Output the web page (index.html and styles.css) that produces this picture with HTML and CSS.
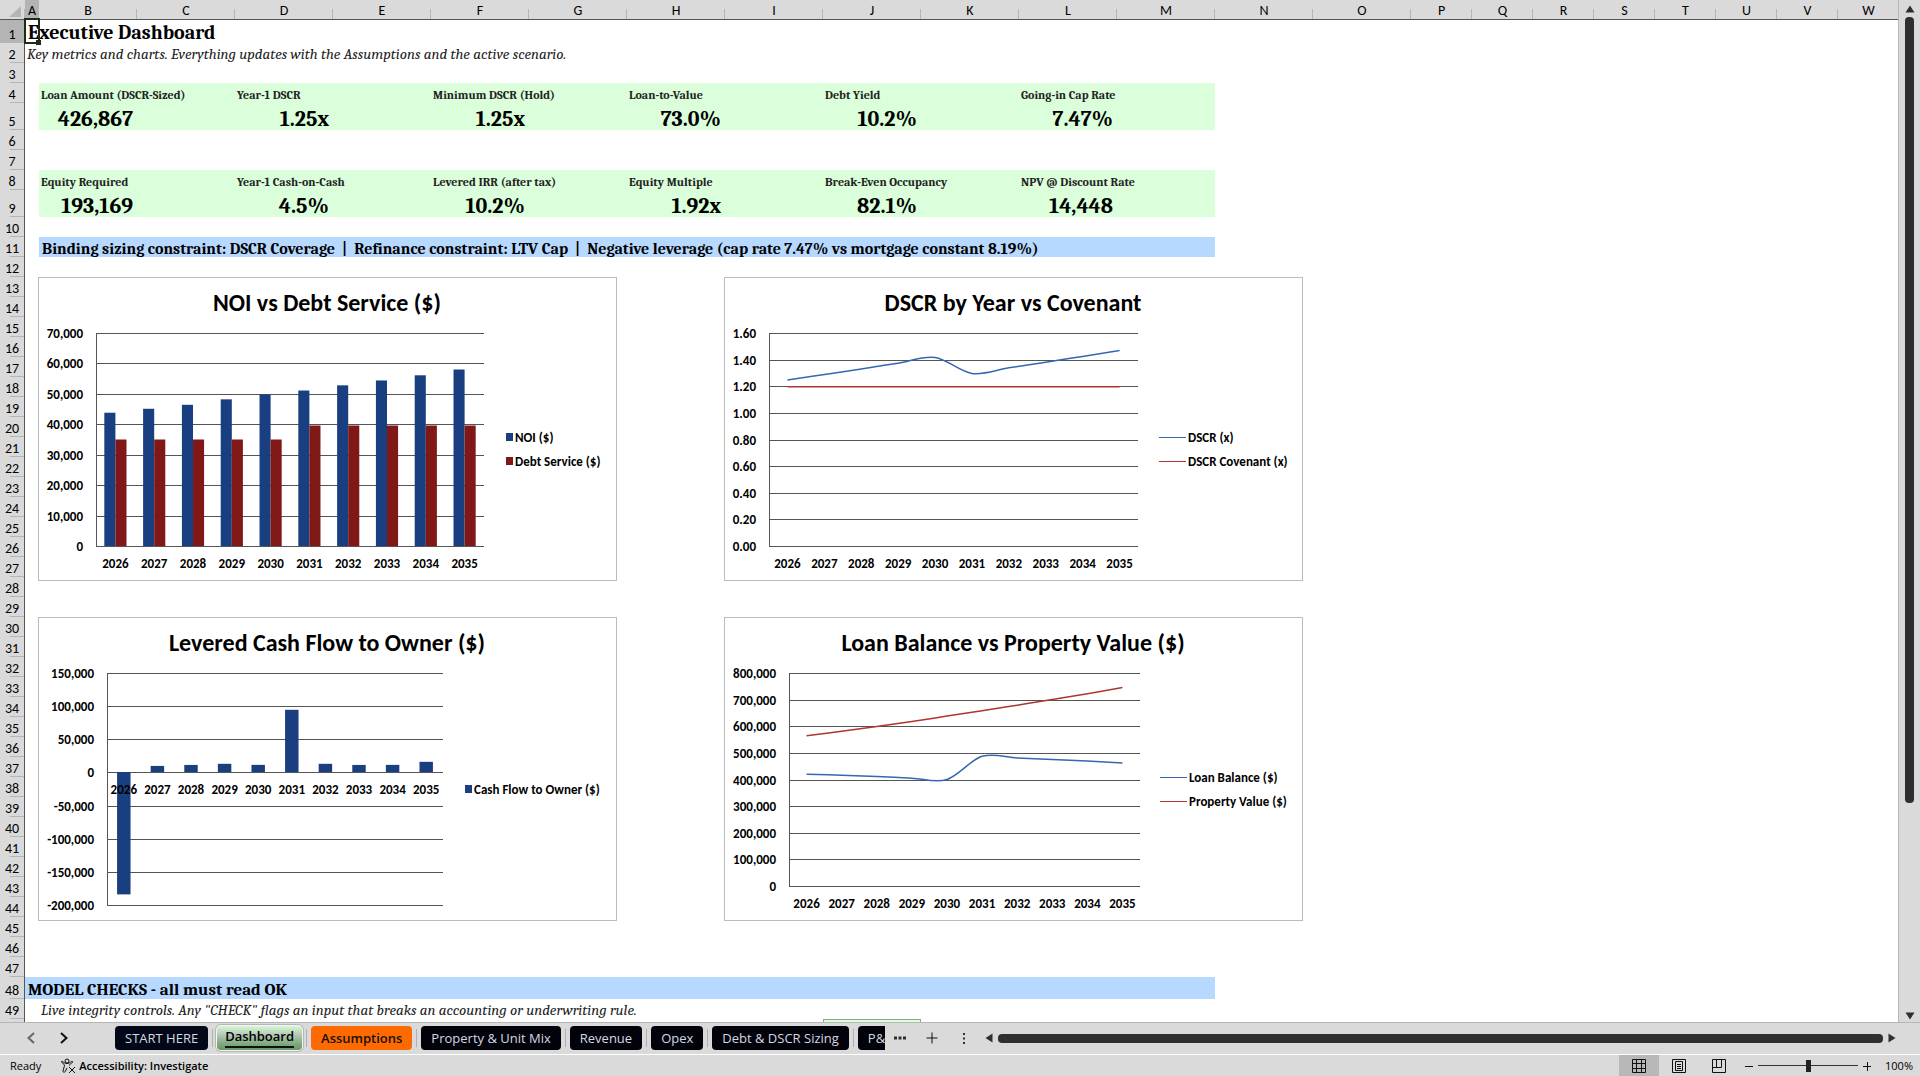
FILE: index.html
```html
<!DOCTYPE html>
<html lang="en">
  <head>
    <meta charset="UTF-8" />
    <meta name="viewport" content="width=device-width, initial-scale=1.0" />
    <title>Executive Dashboard</title>
    <link rel="stylesheet" href="styles.css">
  </head>
  <body>
    <main class="workspace">
      <div class="sheet">
        <table class="grid" id="grid"></table>
        <div class="selection"></div>
        <svg class="chart chart-noi" id="chart-noi" viewBox="0 0 579 304"></svg>
        <svg class="chart chart-dscr" id="chart-dscr" viewBox="0 0 579 304"></svg>
        <svg class="chart chart-cash" id="chart-cash" viewBox="0 0 579 304"></svg>
        <svg class="chart chart-loan" id="chart-loan" viewBox="0 0 579 304"></svg>
      </div>
      <div class="vscroll">
        <svg class="arrow" width="10" height="8"><path d="M5 0.5L9.5 7.5H0.5Z" /></svg>
        <div class="vtrack"><div class="vthumb"></div></div>
        <svg class="arrow" width="10" height="8"><path d="M5 7.5L9.5 0.5H0.5Z" /></svg>
      </div>
    </main>

    <nav class="tabbar">
      <div class="tab-arrows">
        <button type="button" aria-label="Previous sheets">
          <svg width="8" height="12"><path class="dim" d="M7 1L1.5 6L7 11" /></svg>
        </button>
        <button type="button" aria-label="Next sheets">
          <svg width="8" height="12"><path d="M1 1L6.500 6L1 11" /></svg>
        </button>
      </div>
      <div class="tabs">
        <button type="button" class="tab navy">START HERE</button>
        <button type="button" class="tab active"><span>Dashboard</span></button>
        <button type="button" class="tab orange">Assumptions</button>
        <button type="button" class="tab">Property &amp; Unit Mix</button>
        <button type="button" class="tab">Revenue</button>
        <button type="button" class="tab">Opex</button>
        <button type="button" class="tab">Debt &amp; DSCR Sizing</button>
        <button type="button" class="tab">P&amp;L</button>
      </div>
      <div class="tab-tools">
        <button type="button" aria-label="More sheets">
          <svg width="14" height="14"><path class="fill" d="M1 5.500h3v3h-3zM5.500 5.500h3v3h-3zM10 5.500h3v3h-3z" /></svg>
        </button>
        <button type="button" aria-label="New sheet">
          <svg width="14" height="14"><path d="M7 1.500V12.500M1.500 7H12.500" /></svg>
        </button>
        <button type="button" aria-label="Options">
          <svg width="14" height="14"><path class="fill" d="M6 2h2v2h-2zM6 6.500h2v2h-2zM6 11h2v2h-2z" /></svg>
        </button>
      </div>
      <div class="hscroll">
        <svg class="arrow" width="8" height="10"><path d="M0.5 5L7.500 0.5V9.500Z" /></svg>
        <div class="hthumb"></div>
        <svg class="arrow" width="8" height="10"><path d="M7.500 5L0.5 0.5V9.500Z" /></svg>
      </div>
    </nav>

    <footer class="statusbar">
      <span class="ready">Ready</span>
      <button type="button" class="access">
        <svg width="16" height="16" viewBox="0 0 16 16">
          <circle cx="7" cy="3" r="2" />
          <path d="M1.500 3.500C2.500 2.500 3.500 5.500 7 5.500S11.500 2.500 12.500 3.500C13.500 5 9.500 5.500 9.500 7.500M1.500 3.500C1 5 4.500 5.500 4.500 7.500L3 13C3 15 5 14.500 5.500 13L7 10" />
          <path d="M9 9L15 15M15 9L9 15" />
        </svg>
        Accessibility: Investigate
      </button>
      <div class="views">
        <button type="button" class="selected" aria-label="Normal view">
          <svg width="14" height="14"><path d="M0.5 0.5H13.500V13.500H0.5ZM4.500 1V13M9.500 1V13M1 4.500H13M1 9.500H13" /></svg>
        </button>
        <button type="button" aria-label="Page layout view">
          <svg width="14" height="14"><path d="M0.5 0.5H13.500V13.500H0.5ZM3.500 2.500H10.500V11.500H3.500ZM5 5.500H9M5 7.500H9M5 9.500H9" /></svg>
        </button>
        <button type="button" aria-label="Page break view">
          <svg width="14" height="14"><path d="M0.5 0.5H13.500V13.500H0.5ZM4.500 1V8M9.500 1V8.500M1 8.500H9.500" /></svg>
        </button>
      </div>
      <div class="zoom">
        <button type="button" aria-label="Zoom out">
          <svg width="8" height="10"><path d="M0 5.500H8" /></svg>
        </button>
        <input type="range" min="10" max="190" value="100" aria-label="Zoom" />
        <button type="button" aria-label="Zoom in">
          <svg width="8" height="10"><path d="M0 5.500H8M4.500 1V10" /></svg>
        </button>
        <span class="percent">100%</span>
      </div>
    </footer>

    <script src="script.js"></script>
  </body>
</html>
```
FILE: styles.css
```css
* {
  box-sizing: border-box;
}

body {
  margin: 0;
  height: 100vh;
  display: flex;
  flex-direction: column;
  overflow: hidden;
  background-color: #dadada;
  color: #000;
  font-family: "Open Sans", "Noto Sans", sans-serif;
  font-size: 13px;
}

button {
  border: none;
  padding: 0;
  background: none;
  color: inherit;
  font: inherit;
  cursor: pointer;
}

svg path,
svg circle {
  fill: none;
  stroke: #111;
}

svg .fill,
.arrow path {
  fill: #2f2f2f;
  stroke: none;
}

svg .dim {
  stroke: #666;
}

/* Worksheet */
.workspace {
  flex: 1;
  min-height: 0;
  display: flex;
}

.sheet {
  position: relative;
  flex: 1;
  min-width: 0;
  overflow: hidden;
  background-color: white;
  border-right: 1px solid #b5b5b5;
}

.grid {
  table-layout: fixed;
  width: 1899px;
  border-collapse: separate;
  border-spacing: 0;
  font-family: Cambria, "Liberation Serif", serif;
  font-size: 16px;
  line-height: 18px;
}

.grid th,
.grid td {
  padding: 0;
  height: 20px;
  white-space: nowrap;
  vertical-align: bottom;
}

.grid .col-rownum {
  width: 25px;
}

.grid .col-a {
  width: 14px;
}

.grid .col-wide {
  width: 98px;
}

.grid .col-narrow {
  width: 61px;
}

.grid th {
  background-color: #dadada;
  font-family: Calibri, Lato, sans-serif;
  font-size: 14px;
  font-weight: 400;
  line-height: 17px;
  text-align: center;
}

.grid thead th {
  border-bottom: 1px solid #555;
  background-image: linear-gradient(#b5b5b5, #b5b5b5);
  background-size: 1px 10px;
  background-position: right bottom;
  background-repeat: no-repeat;
}

.grid tbody th {
  border-right: 1px solid #555;
  background-image: linear-gradient(#b5b5b5, #b5b5b5);
  background-size: 14px 1px;
  background-position: right bottom;
  background-repeat: no-repeat;
}

.grid thead .picked,
.grid tbody .picked {
  background-color: #b4b4b4;
}

.grid .corner svg {
  display: block;
  margin-left: 9px;
}

.grid .corner path {
  fill: #b5b5b5;
  stroke: none;
}

.grid .row-title td,
.grid .row-title th {
  height: 23px;
}

.grid .row-value td,
.grid .row-value th {
  height: 27px;
}

.grid .row-section td,
.grid .row-section th {
  height: 22px;
}

.grid .title {
  padding-left: 3px;
  font-size: 20px;
  font-weight: 700;
  line-height: 20px;
}

.grid .note {
  padding-left: 2px;
  font-size: 15px;
  font-style: italic;
  color: #222;
}

.grid .kpi {
  background-color: #daffda;
}

.grid .label {
  padding-left: 2px;
  font-size: 12px;
  font-weight: 700;
  line-height: 15px;
  color: #222;
}

.grid .value {
  padding-right: 4px;
  font-size: 22px;
  font-weight: 700;
  line-height: 21px;
  text-align: right;
}

.grid .band {
  padding-left: 3px;
  background-color: #b7d9ff;
  font-weight: 700;
  line-height: 16px;
  white-space: pre;
}

.grid .section {
  padding-left: 3px;
  background-color: #b7d9ff;
  font-size: 17px;
  font-weight: 700;
  line-height: 18px;
}

.grid .check {
  border: 1px solid #8fa58f;
  background-color: #daffda;
}

.selection {
  position: absolute;
  left: 24px;
  top: 18px;
  width: 16px;
  height: 26px;
  border: 2px solid #1c2b1c;
}

.selection::after {
  content: "";
  position: absolute;
  right: -3px;
  bottom: -3px;
  width: 5px;
  height: 5px;
  background-color: #1c2b1c;
}

/* Charts float over the cells */
.chart {
  position: absolute;
  width: 579px;
  height: 304px;
  outline: 1px solid #bbb;
  outline-offset: -1px;
  background-color: white;
  font-family: Calibri, Lato, sans-serif;
}

.chart-noi {
  left: 38px;
  top: 277px;
}

.chart-dscr {
  left: 724px;
  top: 277px;
}

.chart-cash {
  left: 38px;
  top: 617px;
}

.chart-loan {
  left: 724px;
  top: 617px;
}

.chart text {
  font-size: 13px;
  font-weight: 700;
}

.chart .chart-title {
  font-size: 24px;
  text-anchor: middle;
}

.chart .tick-y {
  text-anchor: end;
}

.chart .tick-x {
  text-anchor: middle;
}

.chart line {
  stroke: #555;
  shape-rendering: crispEdges;
}

.chart rect {
  fill: #193f80;
}

.chart .series-1 rect,
.chart rect.series-1 {
  fill: #801818;
}

.chart path,
.chart .legend-line {
  stroke: #3468b2;
  stroke-width: 1.5;
}

.chart path.series-1,
.chart .legend-line.series-1 {
  stroke: #b03430;
}

/* Scroll bars */
.vscroll {
  width: 21px;
  padding: 5px 0 2px;
  display: flex;
  flex-direction: column;
  align-items: center;
}

.vtrack {
  flex: 1;
  padding-top: 4px;
}

.vthumb {
  width: 9px;
  height: 79%;
  border-radius: 4px;
  background-color: #2f2f2f;
}

.hscroll {
  flex: 1;
  display: flex;
  align-items: center;
  gap: 5px;
  padding-right: 24px;
}

.hthumb {
  flex: 1;
  height: 9px;
  border-radius: 4px;
  background-color: #2f2f2f;
}

.arrow {
  display: block;
}

/* Sheet tabs */
.tabbar {
  height: 32px;
  display: flex;
  align-items: center;
  padding-bottom: 1px;
  border-top: 1px solid #b5b5b5;
}

.tab-arrows {
  width: 115px;
  display: flex;
  gap: 25px;
  padding-left: 27px;
}

.tab-arrows svg,
.tab-tools svg,
.views svg,
.zoom svg {
  display: block;
}

.tab-arrows path {
  stroke-width: 2;
}

.tabs {
  width: 770px;
  display: flex;
  gap: 9px;
  padding: 2px 0;
  overflow: hidden;
}

.tab {
  position: relative;
  flex: none;
  height: 24px;
  padding: 0 10px;
  border-radius: 4px;
  background-color: #02030a;
  color: #d5d8e0;
}

.tabs .tab + .tab::before {
  content: "";
  position: absolute;
  left: -5px;
  top: 3px;
  width: 1px;
  height: 18px;
  background-color: #b0b0b0;
}

.tab.navy {
  background-color: #020818;
}

.tab.active {
  padding: 0 8px;
  background-image: linear-gradient(#d8f8d8 0%, #b0c4b0 40%, #7fa87d 75%, #6c946b 100%);
  box-shadow: 0 0 0 1px #f5f5f5, 0 0 0 2px #b5b5b5;
  color: #000;
  font-weight: 600;
}

.tab.active span {
  display: block;
  height: 20px;
  border-bottom: 2px solid #111;
  line-height: 16px;
}

.tab.orange {
  background-color: #ff6a00;
  color: #111;
  font-weight: 600;
}

.tab-tools {
  display: flex;
  gap: 18px;
  padding: 0 14px 0 8px;
}

/* Status bar */
.statusbar {
  height: 22px;
  display: flex;
  align-items: center;
  border-top: 1px solid white;
  font-size: 11px;
}

.ready {
  padding-left: 10px;
}

.access {
  display: flex;
  align-items: center;
  gap: 3px;
  margin-left: 19px;
  font-weight: 600;
}

.views {
  display: flex;
  margin-left: auto;
}

.views button {
  width: 40px;
  height: 21px;
  padding-left: 13px;
}

.views .selected {
  background-color: #b8b8b8;
}

.zoom {
  display: flex;
  align-items: center;
  gap: 5px;
  padding: 0 7px 0 6px;
}

.zoom input {
  appearance: none;
  width: 100px;
  height: 12px;
  margin: 0;
  background: linear-gradient(#333, #333) center / 100% 1px no-repeat;
}

.zoom input::-webkit-slider-thumb {
  appearance: none;
  width: 5px;
  height: 12px;
  background-color: #222;
}

.percent {
  padding-left: 9px;
}
```
FILE: script.js
```js
const columns = "ABCDEFGHIJKLMNOPQRSTUVW".split("");
const rowCount = 49;

// Filled cells, keyed by address. span = number of columns covered.
const cells = {
  A1: { text: "Executive Dashboard", cls: "title" },
  A2: { text: "Key metrics and charts. Everything updates with the Assumptions and the active scenario.", cls: "note" },
  B11: {
    text: "Binding sizing constraint: DSCR Coverage  |  Refinance constraint: LTV Cap  |  Negative leverage (cap rate 7.47% vs mortgage constant 8.19%)",
    cls: "band",
    span: 12,
  },
  A48: { text: "MODEL CHECKS - all must read OK", cls: "section", span: 13 },
  B49: { text: 'Live integrity controls. Any "CHECK" flags an input that breaks an accounting or underwriting rule.', cls: "note" },
  J50: { text: "", cls: "check" },
};

const kpis = [
  [4, ["Loan Amount (DSCR-Sized)", "426,867"], ["Year-1 DSCR", "1.25x"], ["Minimum DSCR (Hold)", "1.25x"], ["Loan-to-Value", "73.0%"], ["Debt Yield", "10.2%"], ["Going-in Cap Rate", "7.47%"]],
  [8, ["Equity Required", "193,169"], ["Year-1 Cash-on-Cash", "4.5%"], ["Levered IRR (after tax)", "10.2%"], ["Equity Multiple", "1.92x"], ["Break-Even Occupancy", "82.1%"], ["NPV @ Discount Rate", "14,448"]],
];

kpis.forEach(([row, ...items]) => {
  items.forEach(([label, value], i) => {
    const col = columns[1 + i * 2];
    const next = columns[2 + i * 2];
    cells[col + row] = { text: label, cls: "kpi label", span: 2 };
    cells[col + (row + 1)] = { text: value, cls: "kpi value" };
    cells[next + (row + 1)] = { text: "", cls: "kpi" };
  });
});

const rowClasses = { 1: "row-title", 5: "row-value", 9: "row-value", 48: "row-section" };

function buildGrid() {
  const cols = columns.map((c, i) => {
    const cls = i === 0 ? "col-a" : i < 15 ? "col-wide" : "col-narrow";
    return `<col class="${cls}">`;
  });
  const heads = columns.map((c) => `<th scope="col" class="${c === "A" ? "picked" : ""}">${c}</th>`);
  let html = `<colgroup><col class="col-rownum">${cols.join("")}</colgroup>`;
  html += `<thead><tr><th class="corner"><svg width="12" height="14"><path d="M12 1V12H0Z"/></svg></th>${heads.join("")}</tr></thead><tbody>`;

  for (let r = 1; r <= rowCount + 1; r++) {
    const number = r <= rowCount ? r : "";
    html += `<tr class="${rowClasses[r] || ""}"><th scope="row" class="${r === 1 ? "picked" : ""}">${number}</th>`;
    for (let c = 0; c < columns.length; c++) {
      const cell = cells[columns[c] + r];
      if (!cell) {
        html += "<td></td>";
        continue;
      }
      const span = cell.span || 1;
      html += `<td class="${cell.cls}" colspan="${span}">${cell.text}</td>`;
      c += span - 1;
    }
    html += "</tr>";
  }
  document.getElementById("grid").innerHTML = html + "</tbody>";
}

const years = [2026, 2027, 2028, 2029, 2030, 2031, 2032, 2033, 2034, 2035];

const charts = [
  {
    id: "chart-noi",
    title: "NOI vs Debt Service ($)",
    type: "bar",
    plot: { left: 58, right: 446, top: 56, bottom: 269 },
    min: 0, max: 70000, step: 10000,
    legend: { x: 468, y: 160 },
    series: [
      { name: "NOI ($)", data: [43800, 45100, 46400, 48200, 49800, 51100, 52800, 54400, 56100, 58000] },
      { name: "Debt Service ($)", data: [35000, 35000, 35000, 35000, 35000, 39600, 39600, 39600, 39600, 39600] },
    ],
  },
  {
    id: "chart-dscr",
    title: "DSCR by Year vs Covenant",
    type: "line",
    plot: { left: 45, right: 414, top: 56, bottom: 269 },
    min: 0, max: 1.6, step: 0.2, decimals: 2,
    legend: { x: 435, y: 160 },
    series: [
      { name: "DSCR (x)", data: [1.25, 1.292, 1.334, 1.377, 1.42, 1.3, 1.342, 1.384, 1.428, 1.472] },
      { name: "DSCR Covenant (x)", data: [1.2, 1.2, 1.2, 1.2, 1.2, 1.2, 1.2, 1.2, 1.2, 1.2] },
    ],
  },
  {
    id: "chart-cash",
    title: "Levered Cash Flow to Owner ($)",
    type: "bar",
    plot: { left: 69, right: 405, top: 56, bottom: 288 },
    min: -200000, max: 150000, step: 50000,
    legend: { x: 427, y: 172 },
    series: [
      { name: "Cash Flow to Owner ($)", data: [-184000, 9800, 11300, 13000, 11400, 94500, 13000, 11300, 11400, 16000] },
    ],
  },
  {
    id: "chart-loan",
    title: "Loan Balance vs Property Value ($)",
    type: "line",
    plot: { left: 65, right: 416, top: 56, bottom: 269 },
    min: 0, max: 800000, step: 100000,
    legend: { x: 436, y: 160 },
    series: [
      { name: "Loan Balance ($)", data: [422000, 418000, 413000, 407000, 402000, 489000, 483000, 477000, 471000, 464000] },
      { name: "Property Value ($)", data: [566000, 583000, 601000, 620000, 640000, 660000, 681000, 702000, 724000, 747000] },
    ],
  },
];

function format(value, decimals) {
  return value.toLocaleString("en-US", {
    minimumFractionDigits: decimals || 0,
    maximumFractionDigits: decimals || 0,
  });
}

// Smoothed line through all points
function smoothPath(points) {
  let d = `M${points[0][0]} ${points[0][1]}`;
  for (let i = 0; i < points.length - 1; i++) {
    const p0 = points[i - 1] || points[i];
    const p1 = points[i];
    const p2 = points[i + 1];
    const p3 = points[i + 2] || p2;
    d += `C${p1[0] + (p2[0] - p0[0]) / 6} ${p1[1] + (p2[1] - p0[1]) / 6} `;
    d += `${p2[0] - (p3[0] - p1[0]) / 6} ${p2[1] - (p3[1] - p1[1]) / 6} ${p2[0]} ${p2[1]}`;
  }
  return d;
}

function drawChart(chart) {
  const { left, right, top, bottom } = chart.plot;
  const band = (right - left) / years.length;
  const y = (v) => bottom - ((v - chart.min) / (chart.max - chart.min)) * (bottom - top);
  const zero = Math.round(y(0));
  let out = `<text class="chart-title" x="289" y="34">${chart.title}</text>`;

  const steps = Math.round((chart.max - chart.min) / chart.step);
  for (let i = 0; i <= steps; i++) {
    const value = chart.min + i * chart.step;
    const pos = Math.round(y(value)) + 0.5;
    out += `<line x1="${left}" x2="${right}" y1="${pos}" y2="${pos}"/>`;
    out += `<text class="tick-y" x="${left - 13}" y="${pos + 4}">${format(value, chart.decimals)}</text>`;
  }
  out += `<line x1="${left + 0.5}" x2="${left + 0.5}" y1="${top}" y2="${bottom}"/>`;

  chart.series.forEach((series, s) => {
    if (chart.type === "bar") {
      // gap between groups is 1.5 bars
      const width = band / (chart.series.length + 1.5);
      out += `<g class="series-${s}">`;
      series.data.forEach((v, i) => {
        const x = left + i * band + width * (0.75 + s);
        const y1 = Math.min(y(v), zero);
        out += `<rect x="${x}" y="${y1}" width="${width}" height="${Math.abs(y(v) - zero)}"/>`;
      });
      out += "</g>";
    } else {
      const points = series.data.map((v, i) => [left + (i + 0.5) * band, y(v) + 0.5]);
      out += `<path class="series-${s}" d="${smoothPath(points)}"/>`;
    }

    const ly = chart.legend.y + s * 24;
    const lx = chart.legend.x;
    if (chart.type === "bar") {
      out += `<rect class="series-${s}" x="${lx}" y="${ly - 4}" width="7" height="8"/>`;
      out += `<text x="${lx + 9}" y="${ly + 5}">${series.name}</text>`;
    } else {
      out += `<line class="legend-line series-${s}" x1="${lx}" x2="${lx + 27}" y1="${ly + 0.5}" y2="${ly + 0.5}"/>`;
      out += `<text x="${lx + 29}" y="${ly + 5}">${series.name}</text>`;
    }
  });

  years.forEach((year, i) => {
    out += `<text class="tick-x" x="${left + (i + 0.5) * band}" y="${zero + 22}">${year}</text>`;
  });
  document.getElementById(chart.id).innerHTML = out;
}

buildGrid();
charts.forEach(drawChart);
```
